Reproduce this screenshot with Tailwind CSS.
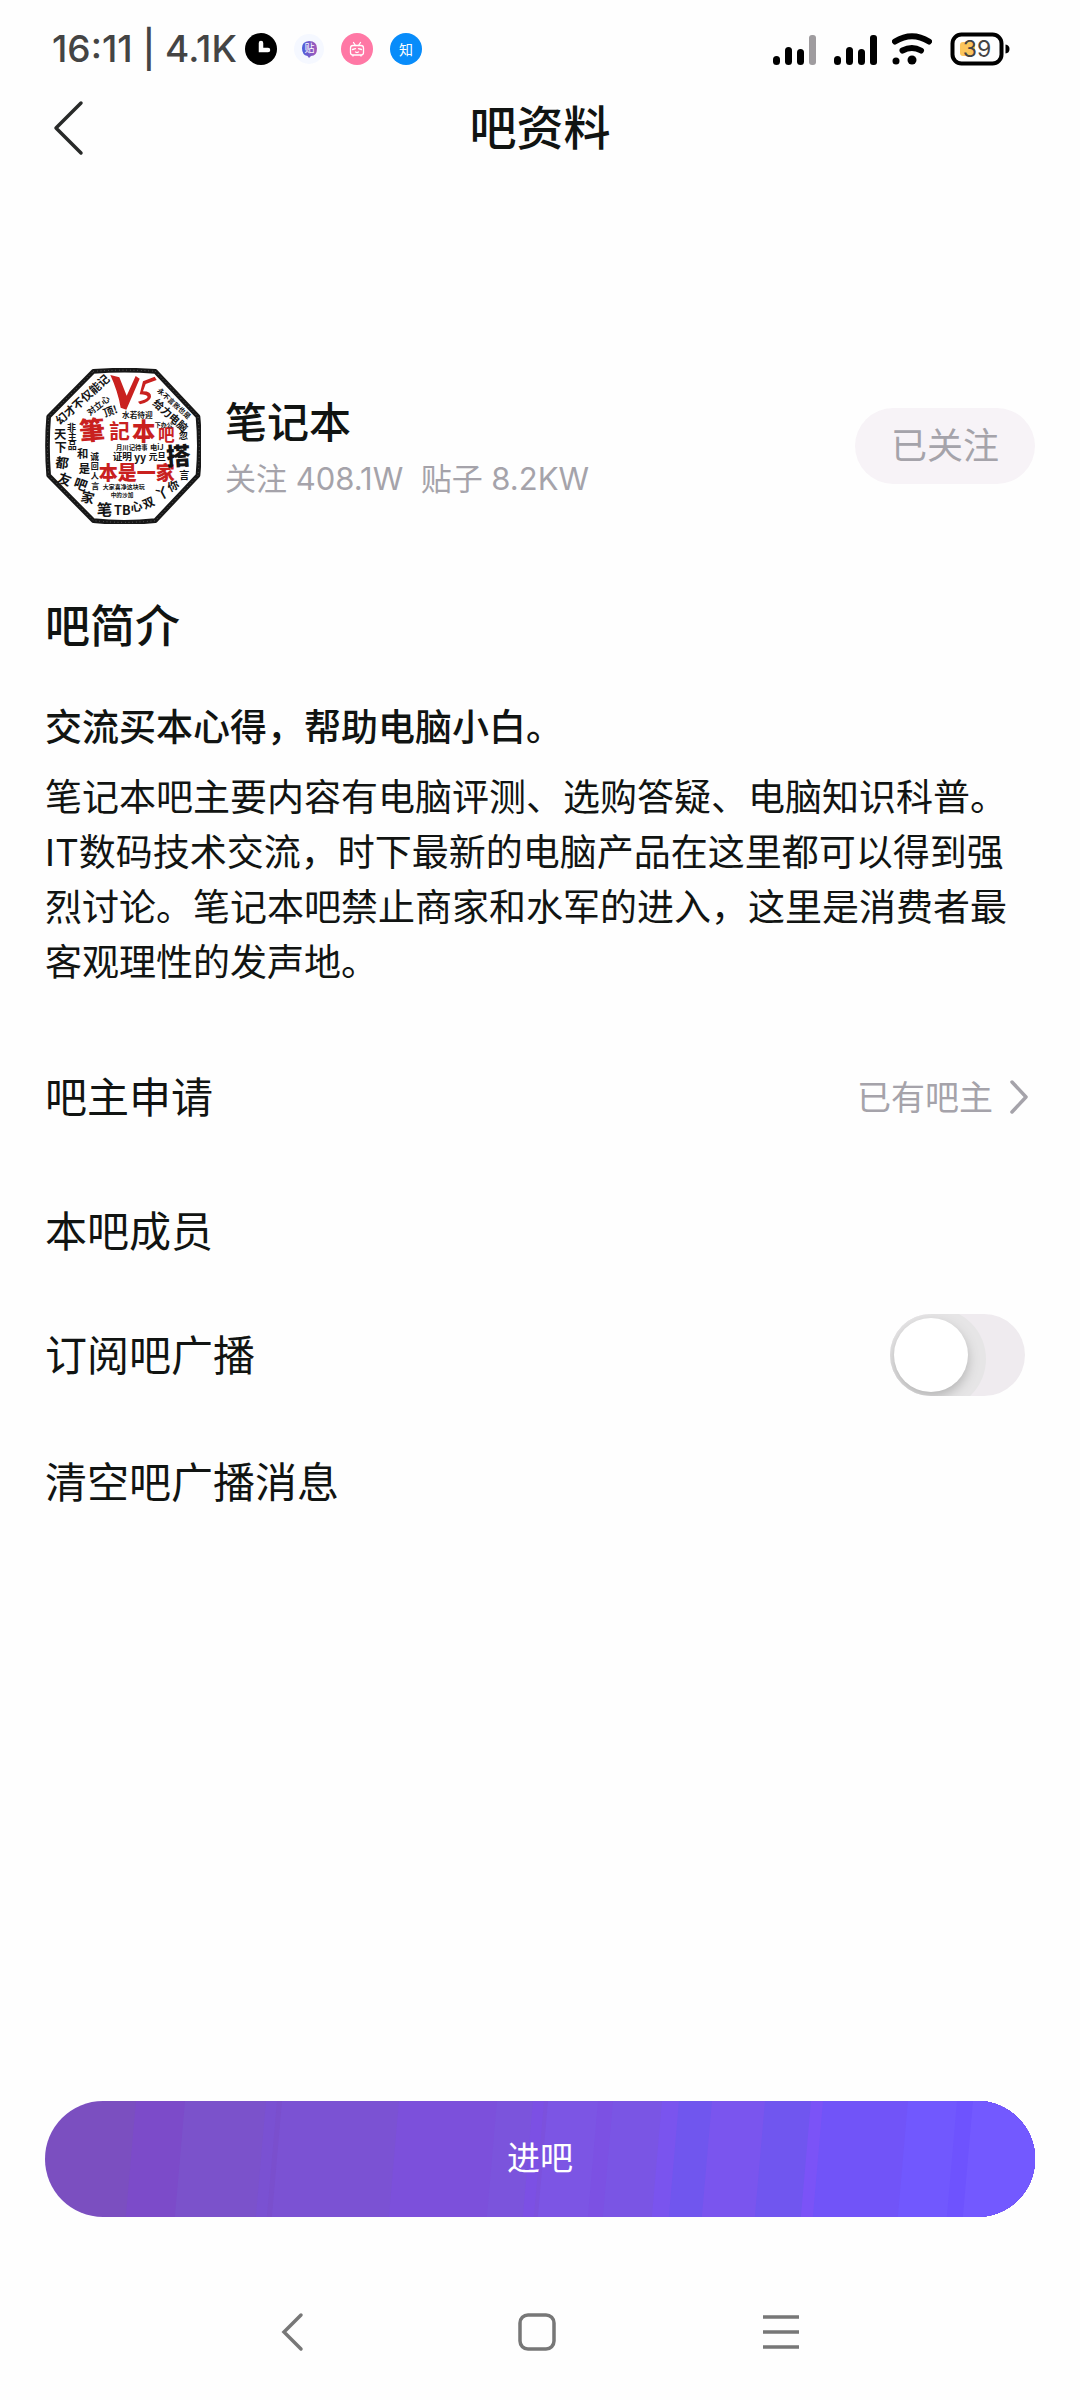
<!DOCTYPE html>
<html lang="zh-CN">
<head>
    <meta charset="UTF-8">
    <meta name="viewport" content="width=device-width, initial-scale=1.0">
    <title>吧资料</title>
    <script src="https://cdn.jsdelivr.net/npm/@tailwindcss/browser@4"></script>
    <style>
        body { font-family: Inter, "Noto Sans CJK SC", sans-serif; }
    </style>
</head>
<body class="min-h-screen flex flex-col bg-[#fefefe] text-[#111412]">

    <!-- 状态栏 -->
    <div class="h-[98px] pl-[52px] pr-[70px] flex items-center justify-between">
        <div class="flex items-center">
            <span class="text-[37px] leading-[48px] font-medium text-[#444] whitespace-pre">16:11 | 4.1K</span>
            <div class="flex items-center gap-[17px] ml-2">
                <svg class="size-8" viewBox="0 0 32 32"><circle cx="16" cy="16" r="16"/><path d="M16 10v7h7" fill="none" stroke="#fff" stroke-width="4.5" stroke-linecap="round"/></svg>
                <svg class="w-[30px] h-8" viewBox="0 0 30 32">
                    <defs><linearGradient id="tb"><stop stop-color="#4a5fdc"/><stop offset="1" stop-color="#a458b8"/></linearGradient></defs>
                    <circle cx="15" cy="16" r="15" fill="#f5f8ff"/>
                    <path d="M8 15q0-6.500 7-7 8 0 8 7.500t-6 7.500l-2 2-1.500-2Q8 22 8 15z" fill="url(#tb)"/>
                    <text x="15.500" y="19" font-size="10" fill="#fff" text-anchor="middle">贴</text>
                </svg>
                <svg class="size-8" viewBox="0 0 32 32">
                    <circle cx="16" cy="16" r="16" fill="#ff78a5"/>
                    <g fill="none" stroke="#fff" stroke-width="1.300" stroke-linecap="round">
                        <rect x="9.500" y="12.500" width="13" height="9.500" rx="2.500"/>
                        <path d="M12.500 9.500l2 3M19.500 9.500l-2 3M11.500 16.500l3-.8M20.500 16.500l-3-.8M14.500 19l1.500.6 1.500-.6M12 22.500v.5M20 22.500v.5"/>
                    </g>
                </svg>
                <svg class="size-8" viewBox="0 0 32 32"><circle cx="16" cy="16" r="16" fill="#088cfa"/><text x="16" y="21.500" font-size="14" fill="#fff" text-anchor="middle">知</text></svg>
            </div>
        </div>
        <div class="flex items-center">
            <svg class="w-[104px] h-8" viewBox="0 0 104 32">
                <rect x="0" y="23" width="7" height="9" rx="3.500"/><rect x="12" y="14" width="7" height="18" rx="3.500"/><rect x="24" y="16" width="7" height="16" rx="3.500"/><rect x="36" y="2" width="7" height="30" rx="3" fill="#9f9c9f"/>
                <rect x="61" y="23" width="7" height="9" rx="3.500"/><rect x="73" y="14" width="7" height="18" rx="3.500"/><rect x="85" y="16" width="7" height="16" rx="3.500"/><rect x="97" y="2" width="7" height="30" rx="3"/>
            </svg>
            <svg class="w-10 h-8 ml-[15px]" viewBox="0 0 40 32">
                <path d="M3 8.500Q20-2 37 8.500M10.500 17.500Q20 12.500 29 17.500" fill="none" stroke="#000" stroke-width="6" stroke-linecap="round"/>
                <circle cx="4" cy="28" r="3.500"/><circle cx="20" cy="27" r="4.500"/>
            </svg>
            <svg class="w-[60px] h-[34px] ml-[18px]" viewBox="0 0 60 34">
                <rect x="2.500" y="2.500" width="49" height="29" rx="9" fill="none" stroke="#000" stroke-width="4"/>
                <path d="M55.500 12.500q4 .5 4 4.500t-4 4.500z"/>
                <rect x="10" y="10" width="15" height="14" rx="3" fill="#fbc55c"/>
                <text x="27" y="25" font-size="23" fill="#444" text-anchor="middle">39</text>
            </svg>
        </div>
    </div>

    <!-- 标题 -->
    <header class="h-[60px] px-[52px] grid grid-cols-[1fr_auto_1fr] items-center">
        <button aria-label="返回">
            <svg class="w-8 h-[56px]" viewBox="0 0 32 56"><path d="M29 3L4 28l25 25" fill="none" stroke="#282a29" stroke-width="3.500" stroke-linecap="round" stroke-linejoin="round"/></svg>
        </button>
        <h1 class="text-[47px] leading-[60px] font-medium">吧资料</h1>
    </header>

    <main class="flex-1 flex flex-col px-[45px] pt-[210px]">
        <section class="flex items-center">
            <svg class="size-[156px]" viewBox="47 52 468 468" font-family="'Noto Sans CJK SC'" font-weight="700">
                <path d="M192 62Q285 55 378 62L506 198Q514 285 506 374L378 510Q285 520 192 510L58 374Q51 285 58 198Z" fill="#fff" stroke="#171717" stroke-width="14" stroke-linejoin="round"/>
                <path d="M192 62Q285 55 378 62L506 198Q514 285 506 374L378 510Q285 520 192 510L58 374Q51 285 58 198Z" fill="none" stroke="#777" stroke-width="3" stroke-dasharray="2 9"/>
                <g fill="#c9211f">
                    <path d="M243 73l27 7 22 55 27-59 12 8-40 93-17-6q-8-48-31-98zM382 88l-33 12-8 22q26 0 24 17-3 15-33 22l-6-8q27-6 29-14-2-8-24-8l10-39 35-14z"/>
                    <text transform="translate(152 270) rotate(-5)" font-size="78" font-weight="900">筆</text>
                    <text x="240" y="266" font-size="62">記</text>
                    <text x="308" y="268" font-size="70" font-weight="900">本</text>
                    <text x="386" y="270" font-size="50">吧</text>
                    <text x="208" y="388" font-size="57" font-weight="900">本是一家</text>
                </g>
                <g fill="#141414">
                    <text transform="translate(92 224) rotate(-42)" font-size="34">幻才不仅能记</text>
                    <text transform="translate(182 196) rotate(-38)" font-size="26">对立心</text>
                    <text transform="translate(226 200) rotate(-20)" font-size="32">顶!</text>
                    <text transform="translate(382 122) rotate(42)" font-size="21">永不言败也是</text>
                    <text transform="translate(368 160) rotate(42)" font-size="32">给力电脑</text>
                    <text x="278" y="203" font-size="23">水若待迎</text>
                    <text x="376" y="228" font-size="18">下办公</text>
                    <text x="74" y="264" font-size="37">天</text>
                    <text x="76" y="304" font-size="36">下</text>
                    <text transform="translate(76 348) rotate(8)" font-size="40">都</text>
                    <text transform="translate(82 393) rotate(20)" font-size="40">友</text>
                    <text x="113" y="240" font-size="27">非</text>
                    <text x="115" y="268" font-size="27">主</text>
                    <text x="115" y="296" font-size="27">品</text>
                    <text x="143" y="322" font-size="34">和</text>
                    <text x="148" y="368" font-size="34">是</text>
                    <text x="183" y="328" font-size="26">诚</text>
                    <text x="184" y="356" font-size="24">回</text>
                    <text x="184" y="386" font-size="24">人</text>
                    <text x="186" y="416" font-size="24">言</text>
                    <text transform="translate(130 408) rotate(20)" font-size="40">吧</text>
                    <text transform="translate(152 450) rotate(14)" font-size="40">家</text>
                    <text x="260" y="298" font-size="19">月川记待事</text>
                    <text x="250" y="329" font-size="29">证明</text>
                    <text x="314" y="330" font-size="32">yy</text>
                    <text x="358" y="329" font-size="26">元旦</text>
                    <text x="362" y="298" font-size="22">电iJ</text>
                    <text transform="translate(412 346) rotate(-4)" font-size="74" font-weight="900">搭</text>
                    <text x="448" y="266" font-size="28">忽</text>
                    <text x="450" y="384" font-size="30">言</text>
                    <text x="220" y="416" font-size="18">大家喜净这块玩</text>
                    <text x="244" y="438" font-size="17">中的沙加</text>
                    <text x="202" y="492" font-size="46">笔</text>
                    <text x="254" y="494" font-size="38">TB</text>
                    <text transform="translate(306 484) rotate(-10)" font-size="36">心</text>
                    <text transform="translate(346 476) rotate(-24)" font-size="36">双</text>
                    <text transform="translate(388 450) rotate(-28)" font-size="40">丫</text>
                    <text transform="translate(422 424) rotate(-26)" font-size="34">你</text>
                </g>
            </svg>
            <div class="ml-6 pt-[10px] flex-1">
                <h2 class="text-[42px] leading-[56px] font-medium">笔记本</h2>
                <p class="text-[31px] leading-[56px] text-[#a5a3aa] whitespace-pre">关注 408.1W  贴子 8.2KW</p>
            </div>
            <button class="px-9 h-[76px] rounded-full bg-[#f7f3f7] text-[36px] leading-[48px] text-[#a5a3aa]">已关注</button>
        </section>

        <h2 class="mt-[71px] text-[45px] leading-[64px] font-medium">吧简介</h2>
        <p class="mt-[41px] text-[37px] leading-[56px] font-medium">交流买本心得，帮助电脑小白。</p>
        <p class="mt-[14px] text-[37px] leading-[55px]">笔记本吧主要内容有电脑评测、选购答疑、电脑知识科普。IT数码技术交流，时下最新的电脑产品在这里都可以得到强烈讨论。笔记本吧禁止商家和水军的进入，这里是消费者最客观理性的发声地。</p>

        <a href="#" class="mt-[65px] h-[84px] pr-[6px] flex items-center text-[42px]">
            <span class="flex-1">吧主申请</span>
            <span class="text-[34px] text-[#a5a3aa]">已有吧主</span>
            <svg class="w-5 h-9 ml-4" viewBox="0 0 20 36"><path d="M3 3l14 15L3 33" fill="none" stroke="#a5a3aa" stroke-width="3.500" stroke-linecap="round" stroke-linejoin="round"/></svg>
        </a>
        <a href="#" class="mt-[50px] h-[84px] flex items-center text-[42px]">本吧成员</a>
        <label class="mt-[40px] h-[84px] pr-[10px] flex items-center justify-between text-[42px]">
            <span>订阅吧广播</span>
            <span class="flex w-[135px] h-[82px] p-1 rounded-full bg-[#efebef] overflow-hidden">
                <input type="checkbox" class="peer sr-only">
                <span class="size-[74px] rounded-full bg-white shadow-[0_5px_12px_#b4b4b4,4px_4px_0_14px_#e6e5e6] peer-checked:translate-x-[53px]"></span>
            </span>
        </label>
        <a href="#" class="mt-[43px] h-[84px] flex items-center text-[42px]">清空吧广播消息</a>

        <button class="relative mt-auto mb-[47px] h-[116px] rounded-full overflow-hidden bg-[#7b4fc0] text-[33px] text-white">
            <!-- 斜向渐变色带 -->
            <svg class="absolute inset-0 size-full" viewBox="0 0 990 116" preserveAspectRatio="none">
                <g transform="skewX(-5)">
                    <rect x="91" width="1000" height="116" fill="#7c4bc9"/>
                    <rect x="140" width="900" height="116" fill="#7b52cb"/>
                    <rect x="221" width="900" height="116" fill="#7a51d2"/>
                    <rect x="232" width="900" height="116" fill="#7a4fcd"/>
                    <rect x="237" width="900" height="116" fill="#7b52d3"/>
                    <rect x="354" width="900" height="116" fill="#7c50db"/>
                    <rect x="452" width="900" height="116" fill="#7b54dc"/>
                    <rect x="488" width="900" height="116" fill="#7c50e4"/>
                    <rect x="499" width="900" height="116" fill="#7c51dd"/>
                    <rect x="503" width="900" height="116" fill="#7c55e4"/>
                    <rect x="553" width="900" height="116" fill="#7c51e3"/>
                    <rect x="568" width="900" height="116" fill="#7a55e4"/>
                    <rect x="617" width="900" height="116" fill="#7a54ee"/>
                    <rect x="634" width="900" height="116" fill="#7056ee"/>
                    <rect x="667" width="900" height="116" fill="#7a55ee"/>
                    <rect x="720" width="900" height="116" fill="#7056ef"/>
                    <rect x="766" width="900" height="116" fill="#7b53f7"/>
                    <rect x="778" width="900" height="116" fill="#7154f8"/>
                    <rect x="863" width="900" height="116" fill="#7158fe"/>
                    <rect x="912" width="900" height="116" fill="#6e53fe"/>
                    <rect x="928" width="900" height="116" fill="#7359ff"/>
                </g>
            </svg>
            <span class="relative">进吧</span>
        </button>
    </main>

    <!-- 系统导航键 -->
    <nav class="h-[136px] pl-[171px] pr-[177px] grid grid-cols-3 justify-items-center items-center">
        <button aria-label="后退"><svg class="size-10" viewBox="0 0 40 40"><path d="M28 3L11 20l17 17" fill="none" stroke="#777" stroke-width="3.500" stroke-linecap="round"/></svg></button>
        <button aria-label="主页"><svg class="size-10" viewBox="0 0 40 40"><rect x="3" y="3" width="34" height="34" rx="8" fill="none" stroke="#777" stroke-width="3.500"/></svg></button>
        <button aria-label="菜单"><svg class="size-10" viewBox="0 0 40 40"><path d="M2 5h36M2 20h36M2 35h36" stroke="#777" stroke-width="3.500"/></svg></button>
    </nav>

</body>
</html>
